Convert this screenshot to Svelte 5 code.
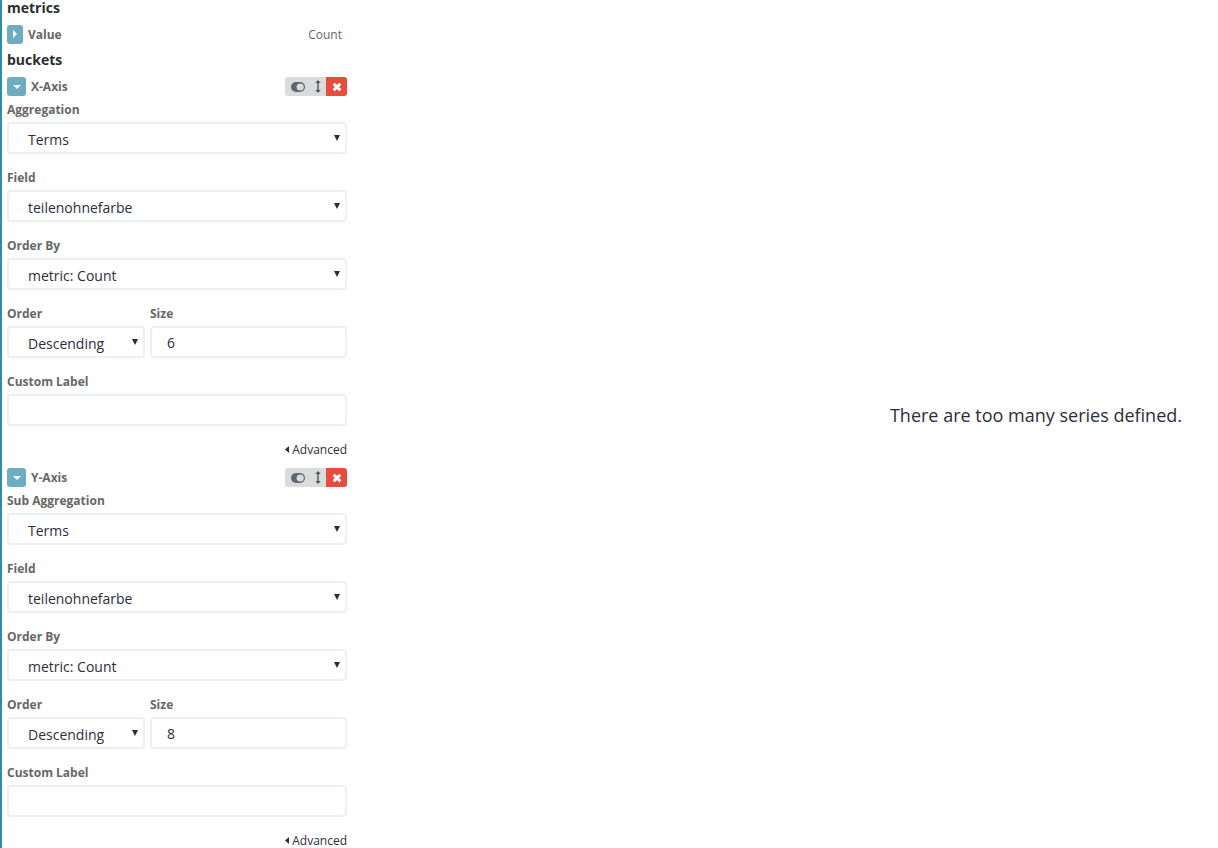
<script>
  const buckets = [
    { name: 'X-Axis', agg: 'Aggregation', size: '6' },
    { name: 'Y-Axis', agg: 'Sub Aggregation', size: '8' }
  ];
</script>

<div class="page">
  <aside class="side">
    <h2>metrics</h2>
    <div class="row metric">
      <span class="toggle narrow">
        <svg width="6" height="8" viewBox="0 0 6 8"><path d="M1 0l4 4-4 4z" fill="#fff" /></svg>
      </span>
      <span class="title">Value</span>
      <span class="count">Count</span>
    </div>
    <h2 class="buckets">buckets</h2>

    {#each buckets as b}
      <section class="bucket">
        <div class="row head">
          <span class="toggle">
            <svg width="8" height="6" viewBox="0 0 8 6"><path d="M0 1h8L4 5z" fill="#fff" /></svg>
          </span>
          <span class="title">{b.name}</span>
          <div class="tools">
            <span class="tool">
              <svg width="14" height="10" viewBox="0 0 14 10"><rect x="0" y="0" width="14" height="10" rx="5" fill="#5c6770" /><circle cx="9.2" cy="5" r="3.6" fill="#dadbdb" /></svg>
            </span>
            <span class="tool arrows">
              <svg width="6" height="13" viewBox="0 0 6 13"><path d="M3 0l2.6 3H3.7v7h1.9L3 13 .4 10h1.9V3H.4z" fill="#4a5560" /></svg>
            </span>
            <span class="tool del">
              <svg width="10" height="10" viewBox="0 0 10 10"><path d="M1.7 1.7l6.6 6.6M8.3 1.7L1.7 8.3" stroke="#fff" stroke-width="3" /></svg>
            </span>
          </div>
        </div>

        <div class="field first">
          <label>{b.agg}</label>
          <div class="select"><select><option>Terms</option></select><i></i></div>
        </div>
        <div class="field">
          <label>Field</label>
          <div class="select"><select><option>teilenohnefarbe</option></select><i></i></div>
        </div>
        <div class="field">
          <label>Order By</label>
          <div class="select"><select><option>metric: Count</option></select><i></i></div>
        </div>
        <div class="field split">
          <div class="col-order">
            <label>Order</label>
            <div class="select"><select><option>Descending</option></select><i></i></div>
          </div>
          <div class="col-size">
            <label>Size</label>
            <input class="num" value={b.size} />
          </div>
        </div>
        <div class="field">
          <label>Custom Label</label>
          <input class="text" value="" />
        </div>
        <div class="advanced">
          <svg width="4" height="7" viewBox="0 0 4 7"><path d="M4 0v7L0 3.5z" fill="#2d2d3a" /></svg>
          <span>Advanced</span>
        </div>
      </section>
    {/each}
  </aside>

  <main class="canvas">
    <p>There are too many series defined.</p>
  </main>
</div>

<style>
  :global(body) {
    margin: 0;
    background: #fff;
    overflow: hidden;
  }
  .page {
    display: flex;
    height: 848px;
    overflow: hidden;
    font-family: "Open Sans", sans-serif;
    color: #444;
  }
  .side {
    box-sizing: border-box;
    width: 347px;
    flex: none;
    border-left: 2px solid #2f8cab;
    padding-left: 5px;
  }
  h2 {
    margin: 0;
    font-size: 14px;
    font-weight: 700;
    line-height: 16px;
    color: #2d2d2d;
  }
  .buckets {
    margin-top: 8px;
    height: 17px;
    line-height: 18px;
  }
  .row {
    display: flex;
    align-items: center;
  }
  .metric {
    height: 18px;
    margin-top: 9px;
  }
  .toggle {
    box-sizing: border-box;
    width: 19px;
    height: 19px;
    border-radius: 3px;
    background: #6eadc1;
    display: flex;
    align-items: center;
    justify-content: center;
    flex: none;
  }
  .toggle.narrow {
    width: 16px;
  }
  .title {
    font-size: 12px;
    font-weight: 700;
    color: #666;
    margin-left: 5px;
  }
  .count {
    margin-left: auto;
    margin-right: 5px;
    font-size: 12px;
    color: #666;
  }
  .buckets + .bucket {
    margin-top: 9px;
  }
  .bucket + .bucket {
    margin-top: 10px;
  }
  .head {
    height: 19px;
  }
  .tools {
    margin-left: auto;
    display: flex;
    height: 19px;
    width: 62px;
    border-radius: 3px;
    overflow: hidden;
    background: #dadbdb;
  }
  .tool {
    display: flex;
    align-items: center;
    justify-content: center;
    width: 25px;
    flex: none;
    padding-left: 1px;
    box-sizing: border-box;
  }
  .arrows {
    width: 16px;
    padding-left: 0;
    padding-right: 1px;
  }
  .del {
    width: 21px;
    background: #e74c3c;
  }
  .field {
    margin-top: 15px;
  }
  .field.first {
    margin-top: 5px;
  }
  label {
    display: block;
    font-size: 12px;
    font-weight: 700;
    line-height: 17px;
    height: 17px;
    margin-bottom: 4px;
    color: #666;
  }
  .select {
    position: relative;
    height: 32px;
  }
  .select i {
    position: absolute;
    right: 7px;
    top: 13px;
    width: 0;
    height: 0;
    border-left: 3.5px solid transparent;
    border-right: 3.5px solid transparent;
    border-top: 6px solid #2d2d2d;
    pointer-events: none;
  }
  select,
  input {
    box-sizing: border-box;
    display: block;
    width: 100%;
    height: 32px;
    margin: 0;
    background: #fff;
    border: 2px solid #ecf0f1;
    border-radius: 4px;
    font-family: inherit;
    font-size: 14px;
    color: #2d2d3a;
    outline: none;
  }
  select {
    appearance: none;
    padding: 2px 0 0 19px;
  }
  .num {
    padding: 1px 0 0 15px;
  }
  .split {
    display: flex;
    gap: 5px;
  }
  .col-order {
    width: 138px;
    flex: none;
  }
  .col-size {
    flex: 1;
  }
  .advanced {
    margin-top: 15px;
    height: 17px;
    display: flex;
    align-items: center;
    justify-content: flex-end;
    gap: 3px;
    font-size: 12px;
    color: #2d2d3a;
  }
  .canvas {
    flex: 1;
    display: flex;
    align-items: center;
    justify-content: flex-end;
    padding-right: 36px;
  }
  .canvas p {
    margin: 0 0 19px;
    font-size: 18px;
    color: #2d2d3a;
  }
</style>
